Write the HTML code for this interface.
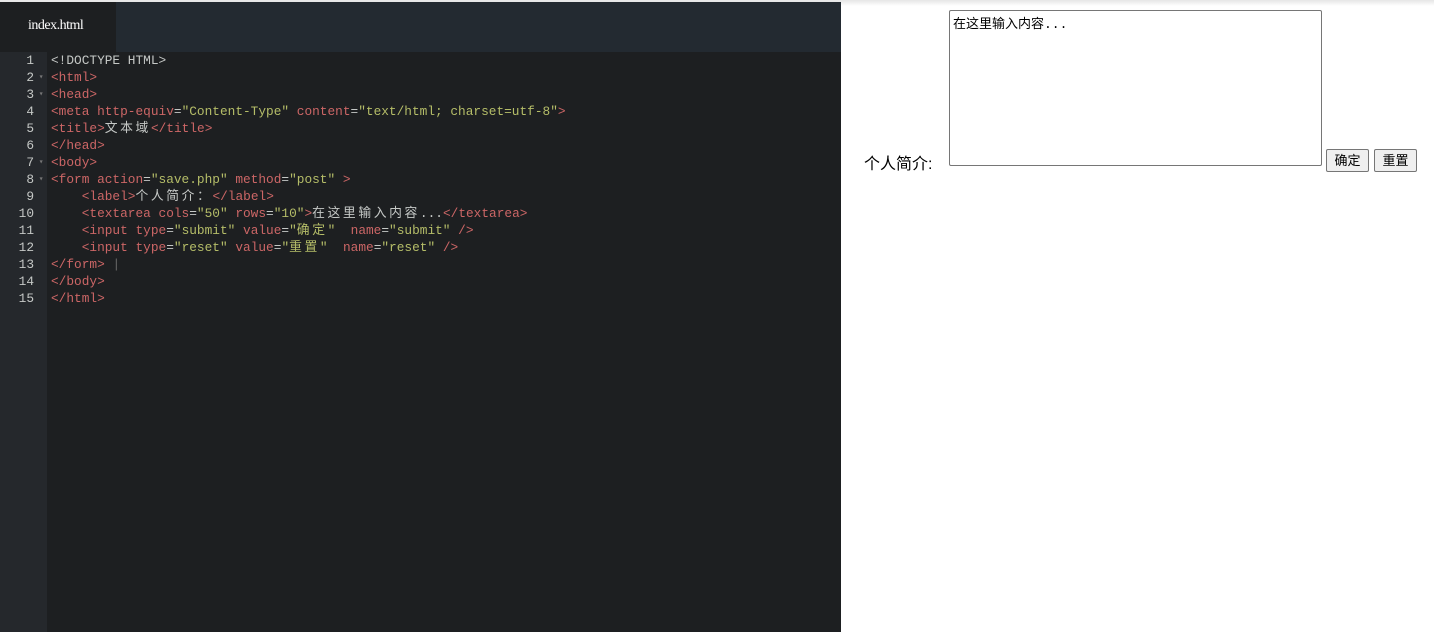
<!DOCTYPE html>
<html><head><meta charset="utf-8"><style>
body{margin:0;width:1434px;height:632px;overflow:hidden;background:#fff;position:relative;font-family:"Liberation Sans","Noto Sans CJK SC",sans-serif}
#ed{position:absolute;left:0;top:0;width:841px;height:632px;background:#1d1f21;border-top:2px solid #e8e8e8;box-sizing:border-box}
#tabs{height:50px;background:#232a31;position:relative}
#tab{position:absolute;left:0;top:0;width:116px;height:50px;background:#1d1f21;color:#fff;font-family:"Liberation Serif","Noto Serif CJK SC",serif;font-size:14px;line-height:48px;text-indent:28px;letter-spacing:-0.5px}
#gut{position:absolute;left:0;top:52px;width:47px;bottom:0;background:#25282c}
#code{position:absolute;left:0;top:52px;font-family:"Liberation Mono","Noto Sans CJK SC",monospace;font-size:12.8px;line-height:17px;color:#c5c8c6}
.l{height:17px;position:relative;white-space:pre}
.n{display:inline-block;width:34px;text-align:right;color:#c5c8c6}
.f{display:inline-block;width:17px;color:#777;font-size:8px;vertical-align:top}
.t{color:#cc6666}.v{color:#b5bd68}.a{color:#cc6666}
.c{letter-spacing:2.6px}
#rt{position:absolute;left:841px;top:0;right:0;height:632px;background:#fff}
#sh{position:absolute;left:0;right:0;top:0;height:6px;background:linear-gradient(#e6e6e6,#fff)}
#ta{position:absolute;left:949px;top:10px;width:373px;height:156px;border:1px solid #767676;border-radius:2px;box-sizing:border-box;font-family:"Liberation Mono","Noto Sans CJK SC",monospace;font-size:13px;padding:2px 3px;color:#000}
#lab{position:absolute;left:864px;top:150px;font-size:16px;color:#000}
.b{position:absolute;top:149px;height:23px;border:1px solid #767676;border-radius:2px;background:#efefef;font-size:13px;line-height:21px;text-align:center;box-sizing:border-box}
</style></head><body>
<div id="ed"><div id="tabs"><div id="tab">index.html</div></div></div>
<div id="gut"></div>
<div id="code"><div class="l"><span class="n">1</span><span class="f"></span>&lt;!DOCTYPE HTML&gt;</div><div class="l"><span class="n">2</span><span class="f"> ▾</span><span class="t">&lt;html&gt;</span></div><div class="l"><span class="n">3</span><span class="f"> ▾</span><span class="t">&lt;head&gt;</span></div><div class="l"><span class="n">4</span><span class="f"></span><span class="t">&lt;meta http-equiv</span>=<span class="v">"Content-Type"</span> <span class="a">content</span>=<span class="v">"text/html; charset=utf-8"</span><span class="t">&gt;</span></div><div class="l"><span class="n">5</span><span class="f"></span><span class="t">&lt;title&gt;</span><span class="c">文本域</span><span class="t">&lt;/title&gt;</span></div><div class="l"><span class="n">6</span><span class="f"></span><span class="t">&lt;/head&gt;</span></div><div class="l"><span class="n">7</span><span class="f"> ▾</span><span class="t">&lt;body&gt;</span></div><div class="l"><span class="n">8</span><span class="f"> ▾</span><span class="t">&lt;form action</span>=<span class="v">"save.php"</span> <span class="a">method</span>=<span class="v">"post"</span> <span class="t">&gt;</span></div><div class="l"><span class="n">9</span><span class="f"></span>    <span class="t">&lt;label&gt;</span><span class="c">个人简介：</span><span class="t">&lt;/label&gt;</span></div><div class="l"><span class="n">10</span><span class="f"></span>    <span class="t">&lt;textarea cols</span>=<span class="v">"50"</span> <span class="a">rows</span>=<span class="v">"10"</span><span class="t">&gt;</span><span class="c">在这里输入内容</span>...<span class="t">&lt;/textarea&gt;</span></div><div class="l"><span class="n">11</span><span class="f"></span>    <span class="t">&lt;input type</span>=<span class="v">"submit"</span> <span class="a">value</span>=<span class="v">"<span class="c">确定</span>"</span>  <span class="a">name</span>=<span class="v">"submit"</span> <span class="t">/&gt;</span></div><div class="l"><span class="n">12</span><span class="f"></span>    <span class="t">&lt;input type</span>=<span class="v">"reset"</span> <span class="a">value</span>=<span class="v">"<span class="c">重置</span>"</span>  <span class="a">name</span>=<span class="v">"reset"</span> <span class="t">/&gt;</span></div><div class="l"><span class="n">13</span><span class="f"></span><span class="t">&lt;/form&gt;</span> <span style="color:#666">|</span></div><div class="l"><span class="n">14</span><span class="f"></span><span class="t">&lt;/body&gt;</span></div><div class="l"><span class="n">15</span><span class="f"></span><span class="t">&lt;/html&gt;</span></div></div>
<div id="rt"><div id="sh"></div></div>
<div id="lab">个人简介:</div>
<div id="ta">在这里输入内容...</div>
<div class="b" style="left:1326px;width:43px">确定</div>
<div class="b" style="left:1374px;width:43px">重置</div>
</body></html>
